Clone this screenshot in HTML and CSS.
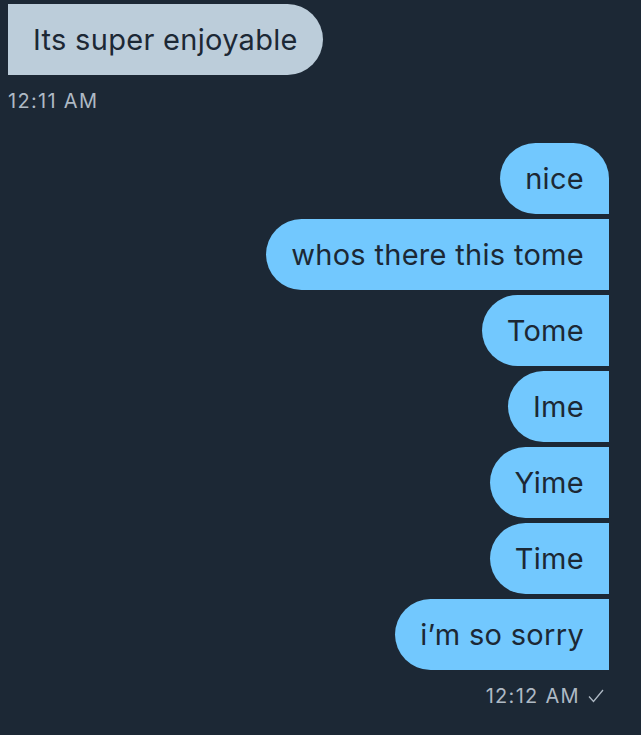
FILE: index.html
```html
<!DOCTYPE html>
<html>
<head>
<meta charset="utf-8">
<link rel="stylesheet" href="styles.css">
</head>
<body>
<div class="thread">
  <div class="group in">
    <div class="bubble in-bubble">Its super enjoyable</div>
    <div class="stamp">12:11 AM</div>
  </div>
  <div class="group out">
    <div class="bubble out-bubble first">nice</div>
    <div class="bubble out-bubble">whos there this tome</div>
    <div class="bubble out-bubble">Tome</div>
    <div class="bubble out-bubble">Ime</div>
    <div class="bubble out-bubble">Yime</div>
    <div class="bubble out-bubble">Time</div>
    <div class="bubble out-bubble">i’m so sorry</div>
    <div class="stamp out-stamp"><span>12:12 AM</span><svg class="check" width="16" height="14" viewBox="0 0 16 14"><polyline points="1,7.5 5.5,12.5 15,1" fill="none" stroke="#aeb9c4" stroke-width="1.3"/></svg></div>
  </div>
</div>
</body>
</html>
```
FILE: styles.css
```css
html, body {
  margin: 0;
  padding: 0;
  background: #1c2835;
  height: 100%;
}
body {
  font-family: Inter, "Liberation Sans", sans-serif;
  -webkit-font-smoothing: antialiased;
}
.thread {
  display: flex;
  flex-direction: column;
  padding: 4px 32px 0 8px;
}
.group {
  display: flex;
  flex-direction: column;
  gap: 5px;
}
.group.in {
  align-items: flex-start;
}
.group.out {
  align-items: flex-end;
  margin-top: 30px;
}
.bubble {
  height: 71px;
  line-height: 71px;
  padding: 0 25px;
  font-size: 29px;
  letter-spacing: 0.3px;
  color: #1c2835;
  box-sizing: border-box;
  white-space: nowrap;
}
.in-bubble {
  background: #bccdda;
  border-radius: 0 36px 36px 0;
}
.out-bubble {
  background: #72c8fe;
  border-radius: 36px 0 0 36px;
}
.out-bubble.first {
  border-radius: 36px 36px 0 36px;
}
.stamp {
  margin-top: 9px;
  font-size: 20px;
  letter-spacing: 1.3px;
  line-height: 24px;
  color: #aeb9c4;
}
.out-stamp {
  margin-top: 9px;
  margin-right: 5px;
  display: flex;
  align-items: center;
  gap: 8px;
}
.check {
  display: block;
}
```
